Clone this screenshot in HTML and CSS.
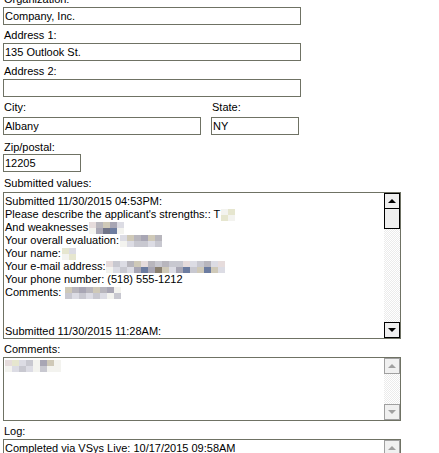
FILE: index.html
```html
<!DOCTYPE html>
<html>
<head>
<meta charset="utf-8">
<link rel="stylesheet" href="styles.css">
</head>
<body>
<div class="form">
  <div class="field f-org">
    <div class="label">Organization:</div>
    <div class="input w-full">Company, Inc.</div>
  </div>
  <div class="field">
    <div class="label">Address 1:</div>
    <div class="input w-full">135 Outlook St.</div>
  </div>
  <div class="field">
    <div class="label">Address 2:</div>
    <div class="input w-full"></div>
  </div>
  <div class="row">
    <div class="field f-city">
      <div class="label">City:</div>
      <div class="input w-city">Albany</div>
    </div>
    <div class="field f-city">
      <div class="label">State:</div>
      <div class="input w-state">NY</div>
    </div>
  </div>
  <div class="field f-zip">
    <div class="label">Zip/postal:</div>
    <div class="input w-zip">12205</div>
  </div>
  <div class="field f-sub">
    <div class="label">Submitted values:</div>
    <div class="textbox tb-values">
      <div class="tb-text">
        <div>Submitted 11/30/2015 04:53PM:</div>
        <div>Please describe the applicant's strengths:: T<span class="mz"><i class="c0"></i><i class="c9"></i><i class="c9"></i><i class="c0"></i></span></div>
        <div>And weaknesses<span class="mz"><i class="c6"></i><i class="c0"></i><i class="c3"></i><i class="c4"></i><i class="c5"></i><i class="c7"></i><i class="c4"></i><i class="c8"></i><i class="c1"></i><i class="c0"></i></span></div>
        <div>Your overall evaluation:<span class="mz"><i class="c1"></i><i class="c0"></i><i class="c5"></i><i class="c1"></i><i class="c3"></i><i class="c2"></i><i class="c4"></i><i class="c2"></i><i class="c5"></i><i class="c1"></i><i class="c3"></i><i class="c2"></i></span></div>
        <div>Your name:<span class="mz"><i class="c9"></i><i class="c0"></i><i class="c1"></i><i class="c9"></i></span></div>
        <div>Your e-mail address:<span class="mz"><i class="c6"></i><i class="c0"></i><i class="c2"></i><i class="c1"></i><i class="c1"></i><i class="c2"></i><i class="c3"></i><i class="c1"></i><i class="c5"></i><i class="c4"></i><i class="c6"></i><i class="c8"></i><i class="c3"></i><i class="c4"></i><i class="c2"></i><i class="cd"></i><i class="c3"></i><i class="c5"></i><i class="c2"></i><i class="c1"></i><i class="c2"></i><i class="c4"></i><i class="c6"></i><i class="c8"></i><i class="c1"></i><i class="c2"></i><i class="c2"></i><i class="c5"></i><i class="c3"></i><i class="c8"></i><i class="c1"></i><i class="c5"></i><i class="c6"></i><i class="c1"></i></span></div>
        <div>Your phone number: (518) 555-1212</div>
        <div>Comments: <span class="mz"><i class="c5"></i><i class="c2"></i><i class="c3"></i><i class="c1"></i><i class="c4"></i><i class="c2"></i><i class="c3"></i><i class="c1"></i><i class="c5"></i><i class="c2"></i><i class="c3"></i><i class="c1"></i><i class="c4"></i><i class="c0"></i><i class="c0"></i><i class="c2"></i></span></div>
        <div>&nbsp;</div>
        <div>&nbsp;</div>
        <div>Submitted 11/30/2015 11:28AM:</div>
      </div>
      <div class="scrollbar">
        <div class="sb-btn"><span class="tri-up"></span></div>
        <div class="sb-thumb"></div>
        <div class="sb-track"></div>
        <div class="sb-btn"><span class="tri-down"></span></div>
      </div>
    </div>
  </div>
  <div class="field f-box">
    <div class="label">Comments:</div>
    <div class="textbox tb-comments">
      <div class="tb-text">
        <div><span class="mz mz-start"><i class="c6"></i><i class="c0"></i><i class="c9"></i><i class="c1"></i><i class="c1"></i><i class="c2"></i><i class="c2"></i><i class="c1"></i><i class="c0"></i><i class="c0"></i><i class="c4"></i><i class="c2"></i><i class="c5"></i><i class="c0"></i><i class="c0"></i><i class="c0"></i></span></div>
      </div>
      <div class="scrollbar disabled">
        <div class="sb-btn"><span class="tri-up"></span></div>
        <div class="sb-track"></div>
        <div class="sb-btn"><span class="tri-down"></span></div>
      </div>
    </div>
  </div>
  <div class="field f-box">
    <div class="label">Log:</div>
    <div class="textbox tb-log">
      <div class="tb-text">
        <div>Completed via VSys Live: 10/17/2015 09:58AM</div>
      </div>
      <div class="scrollbar disabled">
        <div class="sb-btn"><span class="tri-up"></span></div>
        <div class="sb-track"></div>
      </div>
    </div>
  </div>
</div>
</body>
</html>
```

FILE: styles.css
```css
html, body {
  margin: 0;
  padding: 0;
  background: #ffffff;
  overflow: hidden;
}
body {
  font-family: "Liberation Sans", Arial, sans-serif;
  font-size: 11px;
  color: #000;
}
.form {
  padding-left: 3px;
  display: flex;
  flex-direction: column;
  align-items: flex-start;
}
.field {
  display: flex;
  flex-direction: column;
  margin-top: 4px;
}
.f-org { margin-top: -7px; }
.label {
  line-height: 13px;
  height: 13px;
  padding-left: 1px;
  margin-bottom: 1px;
  white-space: nowrap;
}
.input {
  box-sizing: border-box;
  height: 18px;
  border: 1px solid #6f7264;
  padding: 0 1px;
  line-height: 16px;
  white-space: nowrap;
  overflow: hidden;
}
.w-full { width: 298px; }
.w-city { width: 198px; }
.w-state { width: 88px; }
.w-zip { width: 78px; }
.row {
  display: flex;
  gap: 10px;
}
.f-city .label { margin-bottom: 3px; }
.f-zip { margin-top: 6px; }
.f-zip .label { margin-bottom: 0; }
.f-sub { margin-top: 5px; }
.f-sub .label { margin-bottom: 2px; }

.textbox {
  box-sizing: border-box;
  width: 398px;
  border: 1px solid #6f7264;
  display: flex;
  overflow: hidden;
}
.tb-values { height: 147px; }
.tb-comments { height: 64px; }
.tb-log { height: 60px; }
.tb-text {
  flex: 1;
  padding: 2px 0 0 1px;
  line-height: 13px;
  white-space: nowrap;
  overflow: hidden;
}
.tb-text > div { height: 13px; }
.mz {
  display: inline-grid;
  height: 12px;
  grid-template-rows: 6px 6px;
  grid-auto-flow: column;
  grid-auto-columns: 7px;
  vertical-align: top;
  margin-top: 1px;
  margin-left: 1px;
}
.mz-start { margin-left: 0; margin-top: 0; }
.mz i { display: block; }
.c0 { background: #f3f3ef; }
.c1 { background: #dcdce4; }
.c2 { background: #c8c8d0; }
.c3 { background: #b8b6bd; }
.c4 { background: #a8a6b4; }
.c5 { background: #cfc9b8; }
.c6 { background: #e6dcdc; }
.c7 { background: #707488; }
.c8 { background: #6c7ca0; }
.c9 { background: #e6e6cf; }
.cd { background: #8a8070; }

.scrollbar {
  width: 16px;
  display: flex;
  flex-direction: column;
}
.sb-btn {
  box-sizing: border-box;
  height: 16px;
  border: 1px solid #000;
  background: #efefef;
  display: flex;
  align-items: center;
  justify-content: center;
  flex: none;
}
.sb-thumb {
  box-sizing: border-box;
  height: 20px;
  border: 1px solid #000;
  border-top: 0;
  background: #efefef;
  flex: none;
}
.sb-track {
  flex: 1;
  background: repeating-conic-gradient(#ffffff 0 25%, #ebebeb 0 50%) 0 0 / 2px 2px;
}
.tri-up, .tri-down {
  width: 0;
  height: 0;
  border-left: 4px solid transparent;
  border-right: 4px solid transparent;
}
.tri-up { border-bottom: 4px solid #000; }
.tri-down { border-top: 4px solid #000; }
.disabled .sb-btn {
  border-color: #a0a0a0;
  background: #f0f0f0;
}
.disabled .tri-up { border-bottom-color: #a0a0a0; }
.disabled .tri-down { border-top-color: #a0a0a0; }
```
